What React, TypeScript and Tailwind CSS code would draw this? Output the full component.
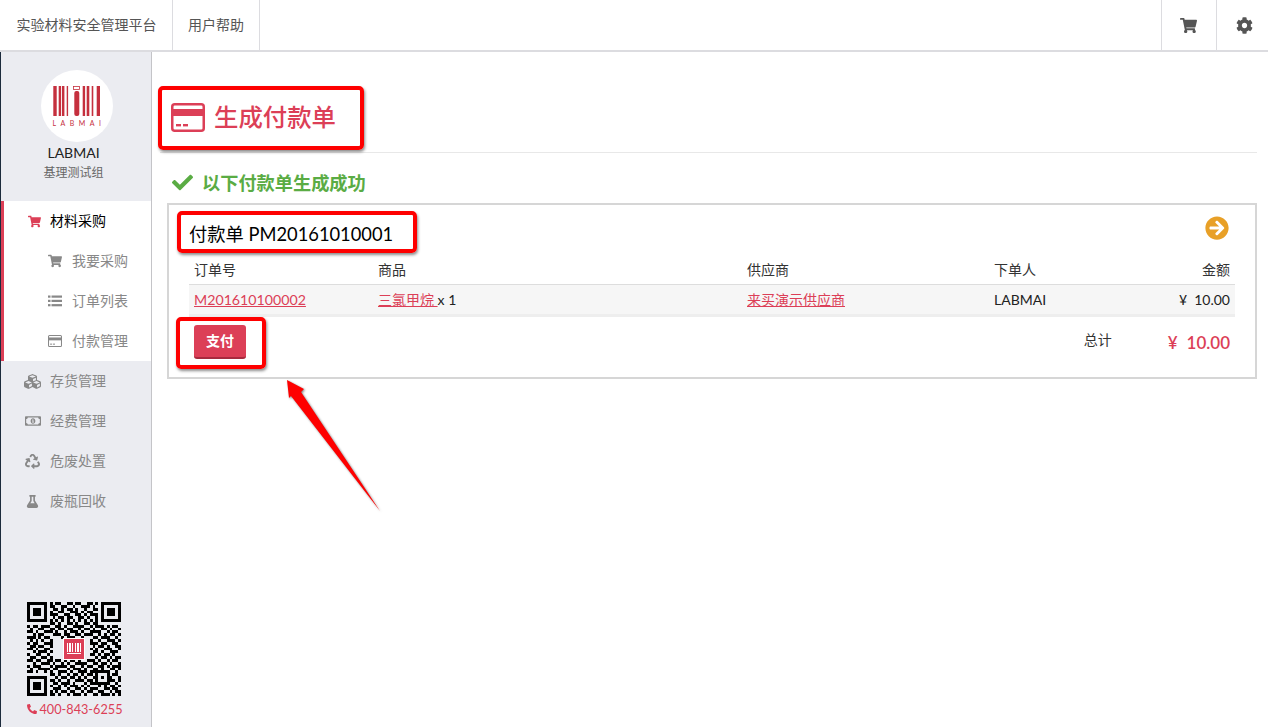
import {
  FaArrowCircleRight,
  FaCheck,
  FaCog,
  FaCubes,
  FaFlask,
  FaPhoneAlt,
  FaRecycle,
  FaRegMoneyBillAlt,
  FaShoppingCart,
} from "react-icons/fa";

const qrRows = [
  "111111101011001101100110101111111",
  "100000101100110010011101001000001",
  "101110100110101101001001101011101",
  "101110101001100111010110001011101",
  "101110101110011001101011101011101",
  "100000100101101100110100101000001",
  "111111101010101010101010101111111",
  "000000001101001101001101100000000",
  "101101110011010011110010111010110",
  "010011001101101100101101001101001",
  "110100111010010111010011110010110",
  "001011000111011001101110010101101",
  "111010110000101110010001101110010",
  "010101001000000000000010010011101",
  "101100111000000000000011101100110",
  "011011001000000000000001011010011",
  "110100110000000000000010100111001",
  "001011101000000000000001101001110",
  "100110010000000000000011010110100",
  "011001101000000000000000101101011",
  "110110011011010110100111010010110",
  "001001110100101001111001101101001",
  "101110001011110110010110011010111",
  "010011110110001011101001101001101",
  "110100101001110100111011111110010",
  "000000001101001011010110100010110",
  "111111100010110110101001101011001",
  "100000101101001001110110100011101",
  "101110100110111010001011111110010",
  "101110101001010111010100010101101",
  "101110100111001001101011100110110",
  "100000101010110110010110011001011",
  "111111101101001011101001101110101",
];

// FA4 style card: outline, thick stripe, two dashes bottom left
function CardIcon({ size }: { size: number }) {
  return (
    <svg width={size} height={(size * 29) / 34} viewBox="0 0 34 29" fill="currentColor">
      <rect x="1.25" y="1.25" width="31.5" height="26.5" rx="2.5" fill="none" stroke="currentColor" strokeWidth="2.5" />
      <rect x="1" y="6" width="32" height="7" />
      <rect x="5" y="21" width="5" height="2.4" />
      <rect x="12" y="21" width="5" height="2.4" />
    </svg>
  );
}

function ListIcon({ size }: { size: number }) {
  return (
    <svg width={size} height={size} viewBox="0 0 14 14" fill="currentColor">
      <rect x="0" y="1.5" width="2.5" height="2.2" />
      <rect x="3.5" y="1.5" width="10.5" height="2.2" />
      <rect x="0" y="5.8" width="2.5" height="2.2" />
      <rect x="3.5" y="5.8" width="10.5" height="2.2" />
      <rect x="0" y="10.1" width="2.5" height="2.2" />
      <rect x="3.5" y="10.1" width="10.5" height="2.2" />
    </svg>
  );
}

const subItems = [
  { label: "我要采购", icon: FaShoppingCart },
  { label: "订单列表", icon: ListIcon },
  { label: "付款管理", icon: CardIcon },
];

const navItems = [
  { label: "存货管理", icon: FaCubes, size: 17 },
  { label: "经费管理", icon: FaRegMoneyBillAlt, size: 16 },
  { label: "危废处置", icon: FaRecycle, size: 15 },
  { label: "废瓶回收", icon: FaFlask, size: 13 },
];

function LogoBars() {
  const bars = [
    [0.3, 3.4],
    [5.7, 2.4],
    [9, 2.4],
    [13.7, 1.4],
    [29.7, 2.4],
    [33.7, 2.6],
    [38.7, 1.6],
    [43.7, 3.3],
  ];
  return (
    <g fill="#c5303e">
      {bars.map(([x, w]) => (
        <rect key={x} x={x} y="0" width={w} height="30" />
      ))}
      <rect x="20.5" y="0.5" width="6" height="3" fill="none" stroke="#c5303e" strokeWidth="0.8" />
      <rect x="21.3" y="5" width="5" height="25" rx="2" />
    </g>
  );
}

function QrCode() {
  return (
    <svg width="94" height="94" viewBox="0 0 33 33" shapeRendering="crispEdges">
      {qrRows.map((row, y) =>
        row.split("").map((cell, x) =>
          cell === "1" ? <rect key={`${x}-${y}`} x={x} y={y} width="1" height="1" fill="#000" /> : null
        )
      )}
      <rect x="12.6" y="12.6" width="7.8" height="7.8" rx="0.8" fill="#fff" />
      <rect x="13" y="13" width="7" height="7" rx="0.6" fill="#dc3f57" />
      <g fill="#fff">
        <rect x="14" y="14.4" width="0.5" height="3" />
        <rect x="14.9" y="14.4" width="0.5" height="3" />
        <rect x="15.8" y="14.4" width="0.5" height="3" />
        <rect x="16.7" y="14.4" width="0.5" height="3" />
        <rect x="17.6" y="14.4" width="0.5" height="3" />
        <rect x="18.5" y="14.4" width="0.5" height="3" />
        <rect x="14" y="18" width="5" height="0.4" />
      </g>
    </svg>
  );
}

function Sidebar() {
  return (
    <aside className="flex w-[152px] shrink-0 flex-col border-l border-r border-l-[#1c2b3c] border-r-[#c4c4c8] bg-[#ebecf1]">
      <div className="flex h-[149px] flex-col items-center pr-[5px] pt-[18px]">
        <div className="ml-[7px] flex h-[72px] w-[72px] items-center justify-center rounded-full bg-white">
          <svg width="72" height="72" viewBox="0 0 72 72">
            <g transform="translate(12 16)">
              <LogoBars />
            </g>
            <text x="38" y="56" textAnchor="middle" fontSize="7" letterSpacing="4.5" fill="#c5303e">
              LABMAI
            </text>
          </svg>
        </div>
        <div className="mt-[1px] text-sm leading-[20px] text-[#222]">LABMAI</div>
        <div className="text-xs leading-[20px] text-[#666]">基理测试组</div>
      </div>

      <nav className="text-sm text-[#888]">
        <div className="border-l-[3px] border-[#dc3f57] bg-white">
          <div className="flex h-10 items-center text-black">
            <span className="flex w-[46px] justify-center pl-[14px]">
              <FaShoppingCart size={13} className="text-[#dc3f57]" />
            </span>
            材料采购
          </div>
          {subItems.map((item) => (
            <div key={item.label} className="flex h-10 items-center">
              <span className="flex w-[68px] justify-center pl-[34px]">
                <item.icon size={14} />
              </span>
              {item.label}
            </div>
          ))}
        </div>
        {navItems.map((item) => (
          <div key={item.label} className="flex h-10 items-center">
            <span className="flex w-[49px] justify-center pl-[14px]">
              <item.icon size={item.size} />
            </span>
            {item.label}
          </div>
        ))}
      </nav>

      <div className="mt-auto flex flex-col items-center pb-[8px] pr-[4px]">
        <QrCode />
        <div className="mt-[3px] flex items-center gap-[2px] pl-[2px] text-[12.7px] leading-[20px] text-[#dc3f57]">
          <FaPhoneAlt size={10} />
          400-843-6255
        </div>
      </div>
    </aside>
  );
}

function PaymentCard() {
  return (
    <section className="ml-[7px] mt-[11px] h-[176px] w-[1090px] border-2 border-[#d6d6d6] pl-[20px] pr-[20px]">
      <div className="flex h-[51px] items-center justify-between pt-[8px]">
        <h2 className="text-[18.3px] text-black">付款单 PM20161010001</h2>
        <FaArrowCircleRight size={24} className="mr-[6px] mt-[-14px] text-[#e8a027]" />
      </div>
      <div className="grid h-[28px] grid-cols-[184px_369px_247px_1fr] items-center px-[5px] text-sm text-[#333]">
        <div>订单号</div>
        <div>商品</div>
        <div>供应商</div>
        <div className="flex justify-between">
          <span>下单人</span>
          <span>金额</span>
        </div>
      </div>
      <div className="grid h-[33px] grid-cols-[184px_369px_247px_1fr] items-center border-t border-b-[3px] border-t-[#ddd] border-b-[#eee] bg-[#f6f6f6] px-[5px] pt-[1px] text-sm text-[#222]">
        <a className="text-[14.2px] text-[#dc3f57] underline">M201610100002</a>
        <div>
          <a className="text-[#dc3f57] underline">三氯甲烷 </a>
          <span> x 1</span>
        </div>
        <a className="text-[#dc3f57] underline">来买演示供应商</a>
        <div className="flex justify-between">
          <span>LABMAI</span>
          <span>¥&nbsp;&nbsp;10.00</span>
        </div>
      </div>
      <div className="flex items-start px-[5px] pt-[8px]">
        <button className="h-[34px] w-[52px] rounded-[3px] border-b-2 border-[#a82a3e] bg-[#dc3f57] text-sm font-bold text-white">
          支付
        </button>
        <span className="ml-auto mt-[5px] text-sm text-[#333]">总计</span>
        <span className="ml-[56px] mt-[6px] flex gap-[9px] text-[17px] font-semibold leading-[24px] text-[#dc3f57]">
          <span>¥</span>
          <span>10.00</span>
        </span>
      </div>
    </section>
  );
}

function Annotations() {
  return (
    <>
      <div className="absolute left-[158px] top-[86px] h-[64px] w-[206px] rounded-[5px] border-4 border-[#fe0000] shadow-[1px_2px_3px_rgba(0,0,0,0.45)]" />
      <div className="absolute left-[177px] top-[211px] h-[42px] w-[240px] rounded-[5px] border-4 border-[#fe0000] shadow-[1px_2px_3px_rgba(0,0,0,0.45)]" />
      <div className="absolute left-[176px] top-[317px] h-[52px] w-[90px] rounded-[5px] border-4 border-[#fe0000] shadow-[1px_2px_3px_rgba(0,0,0,0.45)]" />
      <svg
        className="absolute left-[280px] top-[375px] drop-shadow-[1px_1px_1px_rgba(0,0,0,0.5)]"
        width="110"
        height="145"
        viewBox="280 375 110 145"
      >
        <polygon points="287,380 304,389 301,392 380,511 291,396 289,398" fill="#fe0000" />
      </svg>
    </>
  );
}

export default function App() {
  return (
    <div className="relative flex h-screen flex-col overflow-hidden bg-white font-['Lato','Noto_Sans_CJK_SC',sans-serif] text-sm">
      <header className="flex h-[52px] shrink-0 border-b-2 border-[#dcdce0] text-[#555]">
        <div className="flex w-[173px] items-center justify-center border-r border-[#dcdce0] pl-[1px]">实验材料安全管理平台</div>
        <div className="flex w-[87px] items-center justify-center border-r border-[#dcdce0]">用户帮助</div>
        <div className="ml-auto flex w-[55px] items-center justify-center border-l border-[#dcdce0] pr-[2px]">
          <FaShoppingCart size={17} />
        </div>
        <div className="flex w-[52px] items-center justify-center border-l border-[#dcdce0] pl-[3px]">
          <FaCog size={17} />
        </div>
      </header>
      <div className="flex min-h-0 flex-1">
        <Sidebar />
        <main className="flex-1 pl-[8px]">
          <div className="flex h-[101px] w-[1097px] items-center gap-[9px] border-b border-[#e8e8e8] pl-[11px] pt-[31px] text-[#dc3f57]">
            <CardIcon size={34} />
            <h1 className="text-[24.4px] font-medium">生成付款单</h1>
          </div>
          <div className="flex h-[39px] items-center gap-[9px] pl-[12px] pt-[20px] text-[#5aac44]">
            <FaCheck size={21} />
            <span className="text-[18.2px] font-bold">以下付款单生成成功</span>
          </div>
          <PaymentCard />
        </main>
      </div>
      <Annotations />
    </div>
  );
}
